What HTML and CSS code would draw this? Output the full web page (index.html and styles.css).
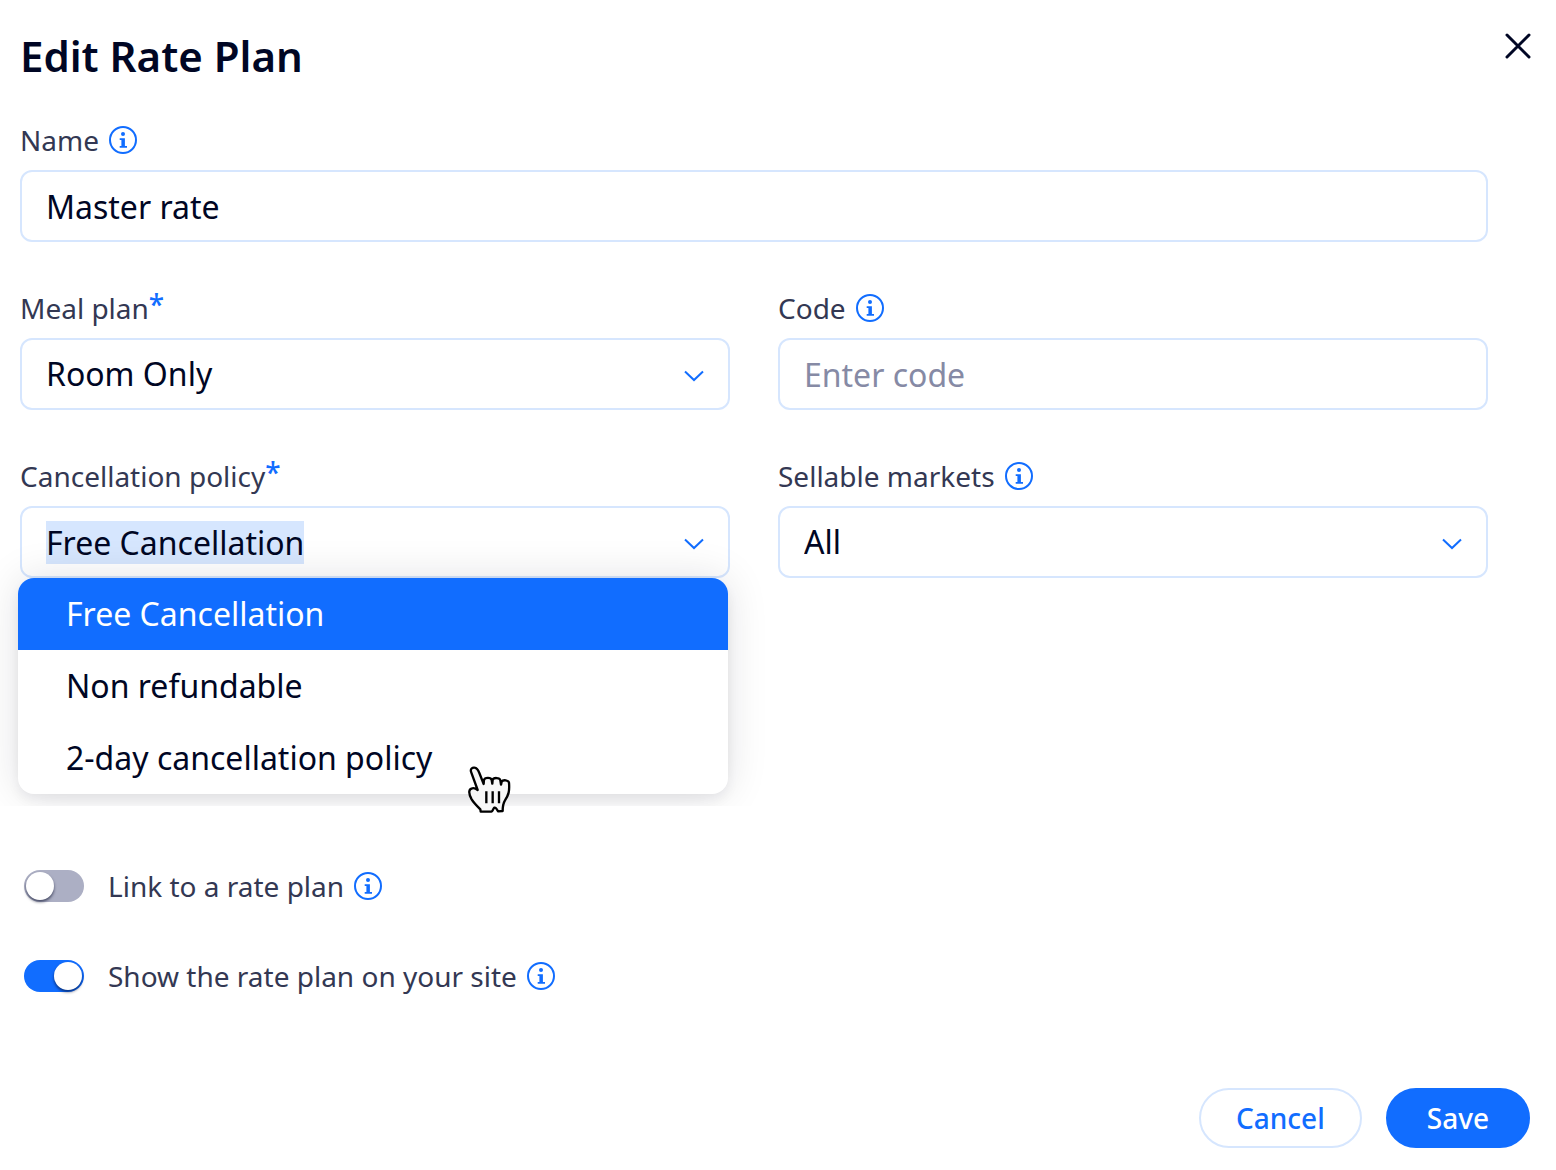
FILE: index.html
```html
<!DOCTYPE html>
<html lang="en">
<head>
  <meta charset="UTF-8">
  <meta name="viewport" content="width=device-width, initial-scale=1">
  <title>Edit Rate Plan</title>
  <link rel="stylesheet" href="styles.css">
</head>
<body>

<!-- Shared icons -->
<svg class="sprite" aria-hidden="true">
  <symbol id="info" viewBox="0 0 28 28">
    <circle cx="14" cy="14" r="13" fill="none" stroke="currentColor" stroke-width="2"/>
    <circle cx="14" cy="8" r="2" fill="currentColor"/>
    <path d="M10.7 12.2h5.2v7.7H18v1.8h-7.3v-1.8h1.7v-5.8h-1.7z" fill="currentColor"/>
  </symbol>
  <symbol id="chevron" viewBox="0 0 20 12">
    <path d="M1 1.5l9 8.5 9-8.5" fill="none" stroke="currentColor" stroke-width="2"/>
  </symbol>
</svg>

<form class="modal">
  <header class="modal-header">
    <h1>Edit Rate Plan</h1>
    <button type="button" class="close" aria-label="Close">
      <svg viewBox="0 0 26 26"><path d="M2 2l22 22M24 2L2 24"/></svg>
    </button>
  </header>

  <div class="fields">
    <div class="field wide">
      <div class="label-row">
        <label for="name">Name</label>
        <button type="button" class="info" aria-label="About name"><svg><use href="#info"/></svg></button>
      </div>
      <input class="control" type="text" id="name" value="Master rate">
    </div>

    <div class="field">
      <div class="label-row">
        <label for="meal">Meal plan<span class="required">*</span></label>
      </div>
      <div class="control-wrap">
        <select class="control" id="meal">
          <option>Room Only</option>
        </select>
        <svg class="chevron"><use href="#chevron"/></svg>
      </div>
    </div>

    <div class="field">
      <div class="label-row">
        <label for="code">Code</label>
        <button type="button" class="info" aria-label="About code"><svg><use href="#info"/></svg></button>
      </div>
      <input class="control" type="text" id="code" placeholder="Enter code">
    </div>

    <div class="field">
      <div class="label-row">
        <label for="policy">Cancellation policy<span class="required">*</span></label>
      </div>
      <div class="control-wrap">
        <input class="control" type="text" id="policy" value="Free Cancellation" role="combobox" aria-expanded="true" aria-controls="policyList" autocomplete="off">
        <svg class="chevron"><use href="#chevron"/></svg>
        <ul class="dropdown" id="policyList" role="listbox">
          <li class="active" role="option" aria-selected="true">Free Cancellation</li>
          <li role="option">Non refundable</li>
          <li role="option">2-day cancellation policy</li>
        </ul>
      </div>
    </div>

    <div class="field">
      <div class="label-row">
        <label for="markets">Sellable markets</label>
        <button type="button" class="info" aria-label="About sellable markets"><svg><use href="#info"/></svg></button>
      </div>
      <div class="control-wrap">
        <select class="control" id="markets">
          <option>All</option>
        </select>
        <svg class="chevron"><use href="#chevron"/></svg>
      </div>
    </div>
  </div>

  <div class="toggles">
    <div class="toggle-row">
      <input class="toggle" type="checkbox" role="switch" id="link">
      <label for="link">Link to a rate plan</label>
      <button type="button" class="info" aria-label="About linking"><svg><use href="#info"/></svg></button>
    </div>
    <div class="toggle-row">
      <input class="toggle" type="checkbox" role="switch" id="show" checked>
      <label for="show">Show the rate plan on your site</label>
      <button type="button" class="info" aria-label="About visibility"><svg><use href="#info"/></svg></button>
    </div>
  </div>

  <footer class="modal-footer">
    <button type="button" class="btn">Cancel</button>
    <button type="submit" class="btn primary">Save</button>
  </footer>

  <!-- Hand pointer over the open list -->
  <svg class="pointer" viewBox="84 48 129 144" aria-hidden="true">
    <path class="hand" d="M94 68C89 56 98 52 104 53C111 54 114 59 118 69L131 102L132 90C134 82 153 81 155 90L157 101L158 90C160 82 179 82 181 91L183 104L185 95C189 88 206 90 207 98C209 124 206 134 195 151C190 159 188 165 188 183L174 184C170 176 167 172 163 173C160 174 159 184 154 185L122 185L121 178C111 168 101 158 95 148C90 139 87 131 88 124C89 114 102 111 113 120Z"/>
    <path d="M139 124v36M158 124v36M177 124v36"/>
  </svg>
</form>

<script>
  // The open combobox starts with its text selected
  var policy = document.getElementById('policy');
  policy.focus();
  policy.select();
</script>
</body>
</html>
```
FILE: styles.css
```css
* {
  box-sizing: border-box;
}

body {
  margin: 0;
  background: #fff;
  color: #000624;
  font-family: "Noto Sans", sans-serif;
  font-size: 28px;
}

button,
input,
select {
  font-family: inherit;
}

.sprite {
  position: absolute;
  width: 0;
  height: 0;
}

.modal {
  position: relative;
  padding-bottom: 22px;
}

.modal-header {
  display: flex;
  justify-content: space-between;
  align-items: flex-start;
  padding: 29px 24px 0 20px;
}

h1 {
  margin: 0;
  font-size: 42px;
  font-weight: 600;
  line-height: 54px;
}

.close {
  width: 28px;
  height: 34px;
  padding: 0;
  border: none;
  background: none;
  cursor: pointer;
}

.close svg {
  display: block;
  width: 26px;
  height: 26px;
  margin: auto;
  fill: none;
  stroke: #000624;
  stroke-width: 3;
  stroke-linecap: round;
}

/* Fields */
.fields {
  display: grid;
  grid-template-columns: 1fr 1fr;
  gap: 48px;
  padding: 39px 68px 228px 20px; /* bottom leaves room for the open list */
  overflow: hidden;
}

.wide {
  grid-column: 1 / -1;
}

.label-row {
  display: flex;
  align-items: center;
  gap: 10px;
  height: 36px;
  margin-bottom: 12px;
}

label {
  color: #333853;
  line-height: 36px;
}

.required {
  color: #116dff;
  font-weight: 500;
  line-height: 1;
  vertical-align: 4px;
}

.info {
  width: 28px;
  height: 28px;
  padding: 0;
  border: none;
  background: none;
  color: #116dff;
  cursor: pointer;
}

.info svg {
  display: block;
  width: 28px;
  height: 28px;
}

.control-wrap {
  position: relative;
}

.control {
  display: block;
  width: 100%;
  height: 72px;
  padding: 0 24px;
  border: 2px solid #d6e6fe;
  border-radius: 12px;
  outline: none;
  appearance: none;
  background: #fff;
  color: #000624;
  font-size: 32px;
  line-height: 48px;
}

.control::placeholder {
  color: #868aa5;
  opacity: 1;
}

.control::selection {
  background: #d6e6fe;
  color: #000624;
}

.chevron {
  position: absolute;
  top: 32px;
  right: 26px;
  width: 20px;
  height: 12px;
  color: #116dff;
  pointer-events: none;
}

/* Open list */
.dropdown {
  position: absolute;
  z-index: 1;
  top: 100%;
  left: -2px;
  width: 100%;
  margin: 0;
  padding: 0;
  list-style: none;
  overflow: hidden;
  border-radius: 16px;
  background: #fff;
  box-shadow: 0 6px 12px rgba(0, 6, 36, 0.06), 0 0 42px rgba(0, 6, 36, 0.12);
}

.dropdown li {
  padding: 0 48px;
  font-size: 32px;
  line-height: 72px;
  cursor: pointer;
}

.dropdown .active {
  background: #116dff;
  color: #fff;
}

.pointer {
  position: absolute;
  z-index: 2;
  top: 766px;
  left: 468px;
  width: 43px;
  height: 48px;
  fill: none;
  stroke: #000;
  stroke-width: 7;
  stroke-linejoin: round;
  pointer-events: none;
}

.pointer .hand {
  fill: #f7f7f7;
}

/* Toggles */
.toggles {
  display: flex;
  flex-direction: column;
  gap: 54px;
  padding: 62px 24px 94px;
}

.toggle-row {
  display: flex;
  align-items: center;
  gap: 10px;
}

.toggle {
  width: 60px;
  height: 32px;
  margin: 0 14px 0 0;
  padding: 2px;
  border-radius: 16px;
  appearance: none;
  background: #acafc4;
  cursor: pointer;
}

.toggle::before {
  content: "";
  display: block;
  width: 28px;
  height: 28px;
  border-radius: 50%;
  background: #fff;
  box-shadow: 0 2px 3px rgba(0, 6, 36, 0.6);
}

.toggle:checked {
  background: #116dff;
}

.toggle:checked::before {
  margin-left: auto;
}

/* Footer */
.modal-footer {
  display: flex;
  justify-content: flex-end;
  gap: 24px;
  padding: 0 26px;
}

.btn {
  height: 60px;
  padding: 0 35px;
  border: 2px solid #d6e6fe;
  border-radius: 30px;
  background: #fff;
  color: #116dff;
  font-size: 28px;
  font-weight: 500;
  cursor: pointer;
}

.btn.primary {
  padding: 0 39px;
  border-color: #116dff;
  background: #116dff;
  color: #fff;
}
```
